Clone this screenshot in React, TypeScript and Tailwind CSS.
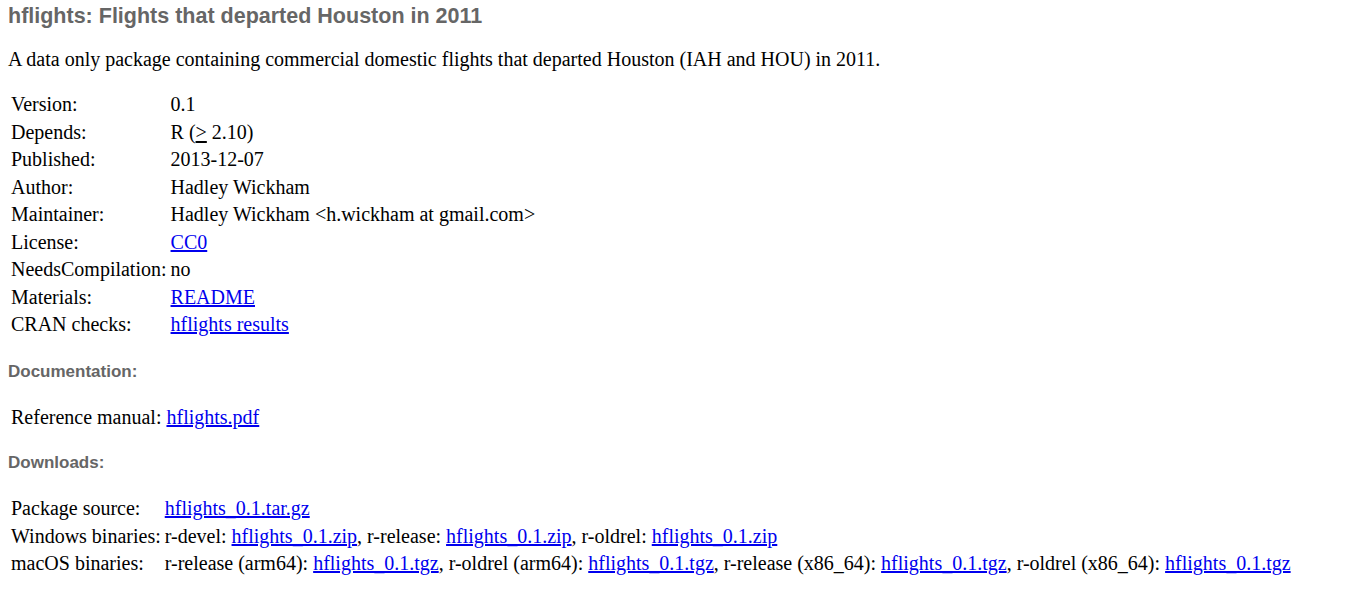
const details: { label: string; value: React.ReactNode }[] = [
  { label: 'Version:', value: '0.1' },
  { label: 'Depends:', value: <>R (<span className="underline underline-offset-2">&gt;</span> 2.10)</> },
  { label: 'Published:', value: '2013-12-07' },
  { label: 'Author:', value: 'Hadley Wickham' },
  { label: 'Maintainer:', value: 'Hadley Wickham <h.wickham at gmail.com>' },
  { label: 'License:', value: <A>CC0</A> },
  { label: 'NeedsCompilation:', value: 'no' },
  { label: 'Materials:', value: <A>README</A> },
  { label: 'CRAN checks:', value: <A>hflights results</A> },
];

function A({ children }: { children: React.ReactNode }) {
  return (
    <a href="#" className="text-[#0000ee] underline">
      {children}
    </a>
  );
}

const Heading = ({ children }: { children: React.ReactNode }) => (
  <h4 className="font-['Liberation_Sans',sans-serif] text-[17px] font-bold text-[#666] leading-[20px]">
    {children}
  </h4>
);

export default function App() {
  return (
    <div className="bg-white min-h-screen px-2 text-black font-['Liberation_Serif',serif] text-[20px]">
      <h2 className="pt-[5px] font-['Liberation_Sans',sans-serif] text-[21.5px] font-bold leading-[22px] text-[#666]">
        hflights: Flights that departed Houston in 2011
      </h2>
      <p className="mt-[22px] leading-[21px]">
        A data only package containing commercial domestic flights that departed Houston (IAH and HOU) in 2011.
      </p>

      {/* package details */}
      <div className="mt-[21px] pl-[3px] grid grid-cols-[auto_1fr] gap-x-[4px]">
        {details.map((d) => (
          <div key={d.label} className="contents">
            <div className="h-[27.5px] leading-[27.5px]">{d.label}</div>
            <div className="h-[27.5px] leading-[27.5px]">{d.value}</div>
          </div>
        ))}
      </div>

      <div className="mt-[23px]">
        <Heading>Documentation:</Heading>
      </div>
      <div className="mt-[22px] pl-[3px] h-[27.5px] leading-[27.5px]">
        Reference manual: <A>hflights.pdf</A>
      </div>

      <div className="mt-[22px]">
        <Heading>Downloads:</Heading>
      </div>
      <div className="mt-[22px] pl-[3px] grid grid-cols-[auto_1fr] gap-x-[4px]">
        <div className="h-[27.5px] leading-[27.5px]">Package source:</div>
        <div className="h-[27.5px] leading-[27.5px]">
          <A>hflights_0.1.tar.gz</A>
        </div>
        <div className="h-[27.5px] leading-[27.5px]">Windows binaries:</div>
        <div className="h-[27.5px] leading-[27.5px]">
          r-devel: <A>hflights_0.1.zip</A>, r-release: <A>hflights_0.1.zip</A>, r-oldrel: <A>hflights_0.1.zip</A>
        </div>
        <div className="h-[27.5px] leading-[27.5px]">macOS binaries:</div>
        <div className="h-[27.5px] leading-[27.5px]">
          r-release (arm64): <A>hflights_0.1.tgz</A>, r-oldrel (arm64): <A>hflights_0.1.tgz</A>, r-release (x86_64):{' '}
          <A>hflights_0.1.tgz</A>, r-oldrel (x86_64): <A>hflights_0.1.tgz</A>
        </div>
      </div>
    </div>
  );
}
